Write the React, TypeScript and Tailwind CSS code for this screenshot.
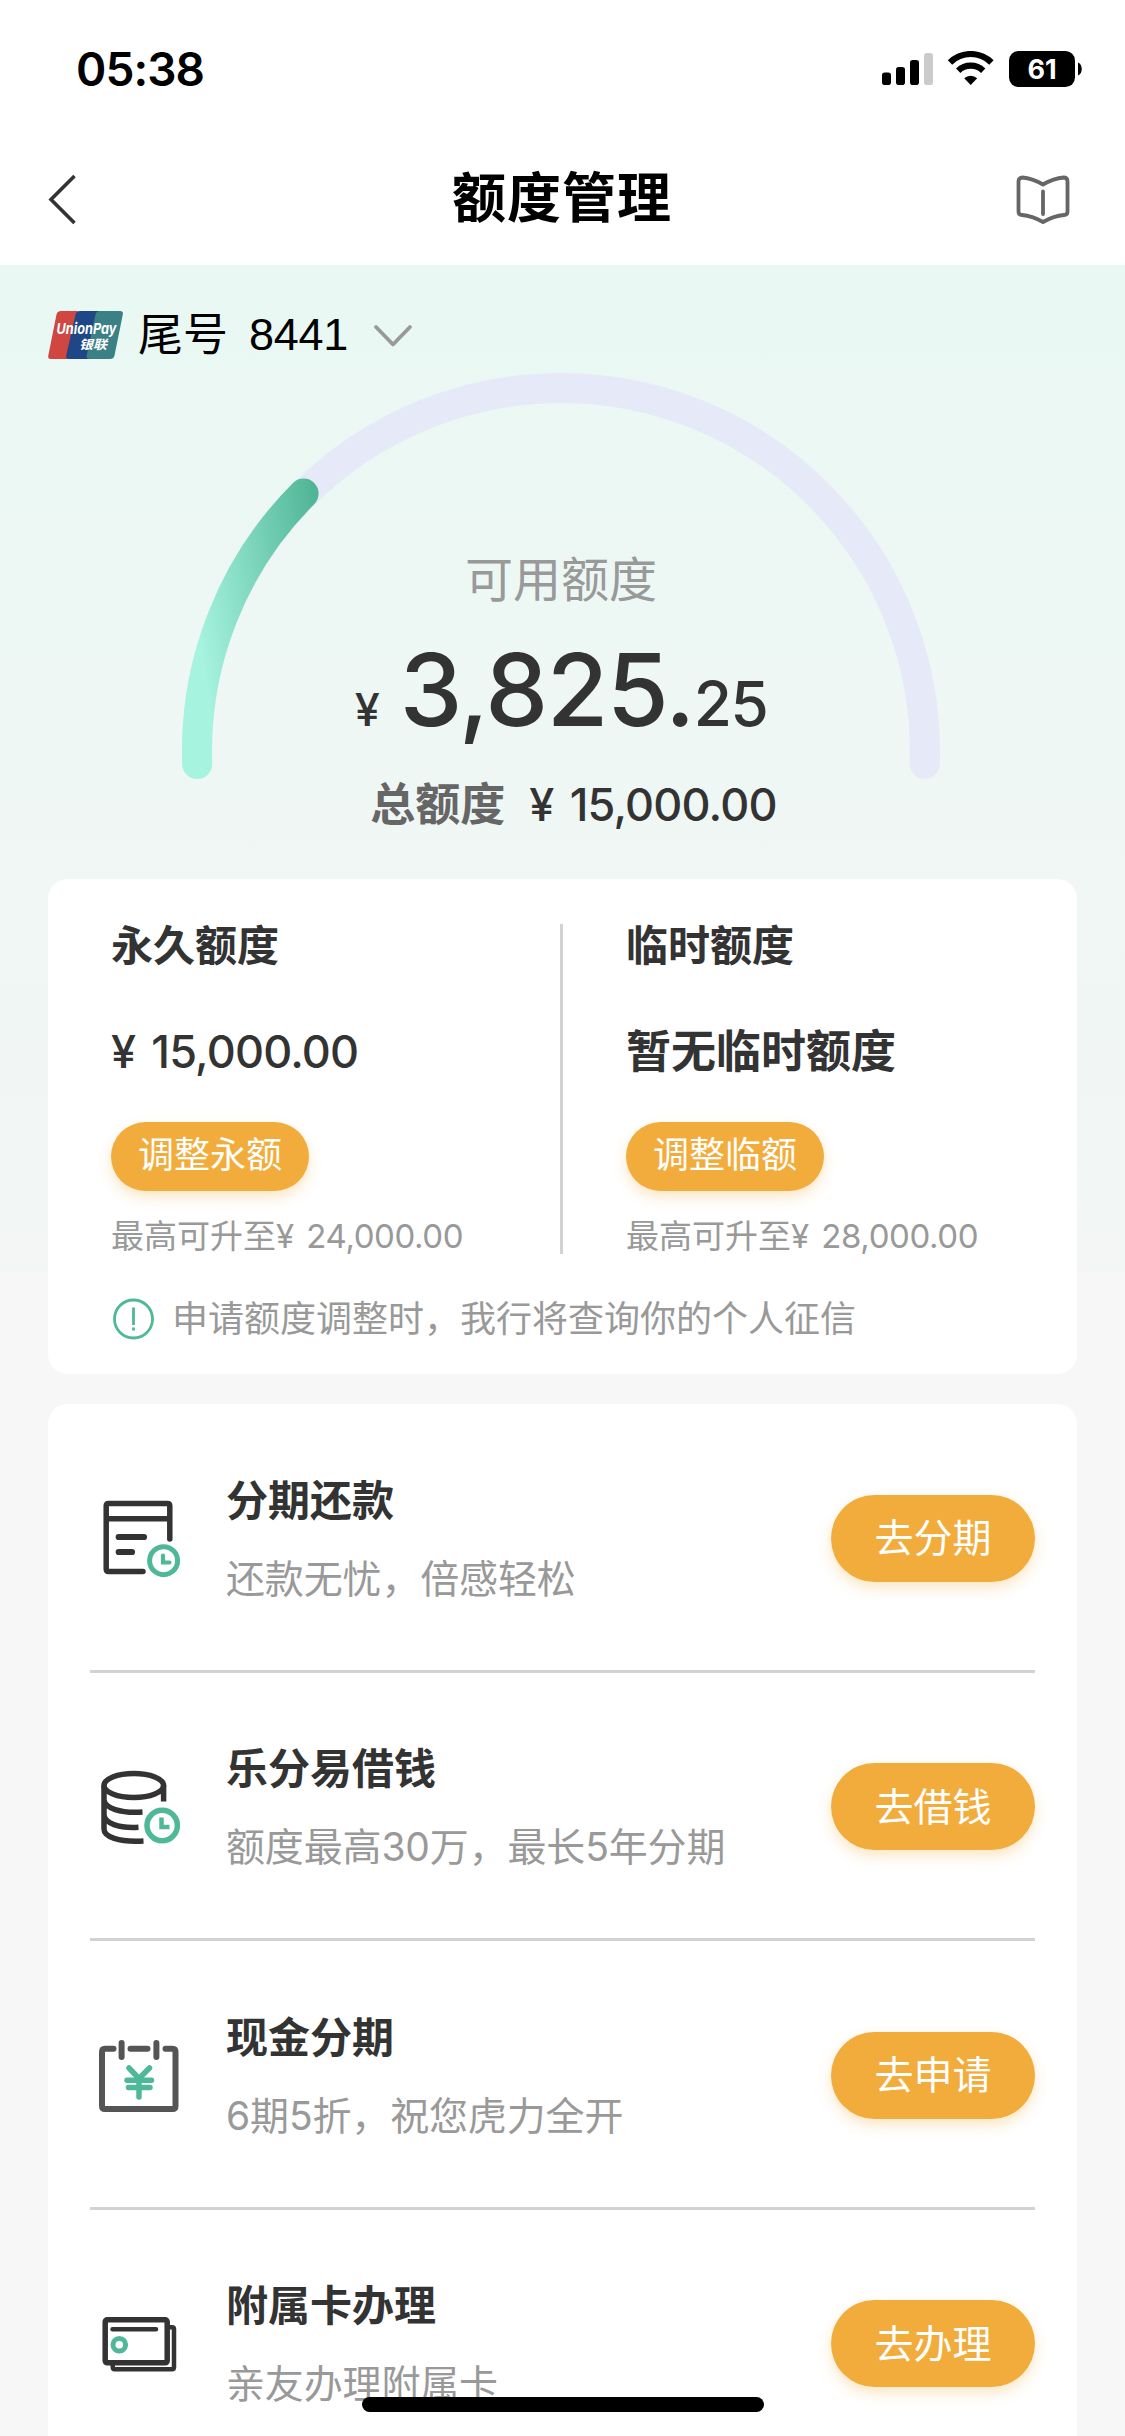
import type { ReactNode } from 'react'

interface Service {
  title: string
  desc: string
  action: string
  icon: ReactNode
}

function StatusBar() {
  return (
    <div className="flex h-[132px] items-center justify-between pt-[6px] pl-[76px] pr-[43px]">
      <span className="text-[46px] leading-[56px] font-semibold tracking-[-0.9px] text-black">05:38</span>
      <svg width="201" height="36" viewBox="0 0 201 36">
        <rect x="1" y="21.5" width="9" height="12.5" rx="2.8" />
        <rect x="15" y="16" width="9" height="18" rx="2.8" />
        <rect x="29" y="9" width="9" height="25" rx="2.8" />
        <rect x="43" y="2" width="9" height="32" rx="2.8" fill="#cbcbcb" />
        <g fill="none" stroke="#000" strokeWidth="6.2">
          <path d="M69 11.5a29.5 29.5 0 0 1 41.4 0" />
          <path d="M77.2 19.7a18 18 0 0 1 25 0" />
        </g>
        <path d="M83.2 27.2a9.5 9.5 0 0 1 13 0L89.7 34z" />
        <rect x="128" y="0" width="66" height="36" rx="9.5" />
        <path d="M197 11.5c5 2 5 11 0 13z" />
        <text x="161" y="28" textAnchor="middle" fill="#fff" className="text-[27px] font-bold">61</text>
      </svg>
    </div>
  )
}

function NavBar() {
  return (
    <div className="flex h-[133px] items-center justify-between pl-[47px] pr-[55px]">
      <svg width="54" height="52" viewBox="0 0 54 52" fill="none" stroke="#333" strokeWidth="3.6">
        <path d="M27.5 3L4 26.5L27.5 50" />
      </svg>
      <h1 className="ml-[7px] text-[54px] leading-[70px] font-bold tracking-[1px] text-black">额度管理</h1>
      <svg width="54" height="52" viewBox="0 0 54 52" fill="none" stroke="#666" strokeWidth="3.8" strokeLinecap="round" strokeLinejoin="round">
        <path d="M27 11.5C20 7.5 13 5 6.5 4.500Q2.500 4.500 2.500 8.500V38.500Q2.500 42 6 42C13 42.500 20 45 27 49C34 45 41 42.500 48 42Q51.500 42 51.500 38.500V8.500Q51.500 4.500 47.500 4.500C41 5 34 7.500 27 11.500Z" />
        <path d="M27 18.500V41" />
      </svg>
    </div>
  )
}

function UnionPayLogo() {
  return (
    <svg className="overflow-visible" width="75" height="48" viewBox="0 0 75 48">
      <path d="M13 0H30L20 48H3Q-.5 48 .3 44.500L8.500 3.500Q9.300 0 13 0Z" fill="#cf4740" />
      <path d="M32 0H53L42 48H21Q17.500 48 18.200 44.500L27.500 3.500Q28.300 0 32 0Z" fill="#1f4788" />
      <path d="M52 0H72Q75.600 0 74.800 3.500L66.500 44.500Q65.700 48 62 48H42Q38 48 38.700 44.500L47.500 3.500Q48.300 0 52 0Z" fill="#3a8186" />
      <g fill="#fff" className="font-bold italic">
        <text x="8.5" y="23" textLength="60" lengthAdjust="spacingAndGlyphs" className="text-[15px]">UnionPay</text>
        <text x="31" y="37.500" textLength="28" lengthAdjust="spacingAndGlyphs" className="text-[12.5px]">银联</text>
      </g>
    </svg>
  )
}

function CardSelector() {
  return (
    <div className="flex h-[107px] items-center pt-[33px] pl-12 text-black">
      <UnionPayLogo />
      <span className="ml-[15px] text-[45px] leading-[60px]">尾号</span>
      <span className="ml-[21px] w-[98px] font-['Liberation_Sans',sans-serif] text-[45px] leading-[58px] tracking-[-0.3px]">8441</span>
      <svg className="ml-[25px] mt-[2px]" width="42" height="24" viewBox="0 0 42 24" fill="none" stroke="#999" strokeWidth="3.8" strokeLinecap="round" strokeLinejoin="round">
        <path d="M4 3L21 20.500L38 3" />
      </svg>
    </div>
  )
}

function Money({ amount }: { amount: string }) {
  return (
    <>
      ¥<span className="ml-[0.34em] tracking-[-0.018em]">{amount}</span>
    </>
  )
}

function LimitGauge() {
  return (
    <div className="mr-[3px] grid h-[507px] justify-center">
      <svg className="col-start-1 row-start-1" width="758" height="408" viewBox="0 0 758 408" fill="none" strokeWidth="30" strokeLinecap="round">
        <defs>
          <linearGradient id="used" gradientUnits="userSpaceOnUse" x1="0" y1="150" x2="135" y2="130">
            <stop offset="0" stopColor="#a6f3df" />
            <stop offset="1" stopColor="#4fb595" />
          </linearGradient>
        </defs>
        <path d="M15.200 392A364 364 0 1 1 742.800 392" stroke="#e6e9f7" />
        <path d="M15.200 392A364 364 0 0 1 121.600 121.600" stroke="url(#used)" />
      </svg>
      <div className="col-start-1 row-start-1 flex flex-col items-center pt-[178px] text-[#333]">
        <div className="text-[48px] leading-[60px] text-[#999]">可用额度</div>
        <div className="mt-[25px] flex items-baseline leading-[110px] font-medium">
          <span className="text-[45px]">¥</span>
          <span className="ml-[20px] text-[100px] tracking-[-1.4px]">3,825.</span>
          <span className="text-[62px] tracking-[-1.5px]">25</span>
        </div>
        <div className="mt-[10px] flex items-baseline pl-[25px] text-[45px] leading-[60px] font-medium">
          <span className="mr-[24px] font-bold text-[#666]">总额度</span>
          <Money amount="15,000.00" />
        </div>
      </div>
    </div>
  )
}

interface LimitColumnProps {
  title: string
  value: ReactNode
  action: string
  max: string
}

function LimitColumn({ title, value, action, max }: LimitColumnProps) {
  return (
    <div className="flex h-[330px] flex-1 flex-col items-start">
      <div className="text-[42px] leading-[44px] font-bold">{title}</div>
      <div className="mt-[56px] text-[45px] leading-[56px] font-medium">{value}</div>
      <button className="mt-[42px] h-[69px] w-[198px] shrink-0 rounded-full bg-[#f2ac3c] pb-[3px] text-[36px] leading-[62px] text-white shadow-[0_6px_14px_rgba(242,172,60,0.3)]">
        {action}
      </button>
      <div className="mt-[24px] text-[33px] leading-[42px] whitespace-nowrap text-[#999]">
        最高可升至¥<span className="ml-[0.37em] tracking-[-0.012em]">{max}</span>
      </div>
    </div>
  )
}

function LimitCard() {
  return (
    <div className="mx-12 h-[495px] rounded-[20px] bg-white pt-[45px] pl-[63px] text-[#333]">
      <div className="flex">
        <LimitColumn title="永久额度" value={<Money amount="15,000.00" />} action="调整永额" max="24,000.00" />
        <div className="mr-[63px] -ml-[2px] h-[330px] w-[3px] bg-[#d2d2d2]" />
        <LimitColumn title="临时额度" value={<span className="font-bold">暂无临时额度</span>} action="调整临额" max="28,000.00" />
      </div>
      <div className="mt-[38px] flex items-center">
        <svg width="46" height="46" viewBox="0 0 46 46" fill="none" stroke="#4fb898" strokeWidth="2.8">
          <circle cx="22.500" cy="23" r="19" />
          <path d="M22.500 11.500V29M22.500 31.500V34.500" />
        </svg>
        <span className="ml-[15px] text-[36px] leading-[54px] text-[#999]">申请额度调整时，我行将查询你的个人征信</span>
      </div>
    </div>
  )
}

const services: Service[] = [
  {
    title: '分期还款',
    desc: '还款无忧，倍感轻松',
    action: '去分期',
    icon: (
      <>
        <path d="M71.800 43V10Q71.800 7.500 69.300 7.500H10.700Q8.200 7.500 8.200 10V73Q8.200 75.500 10.700 75.500H45M9 22.700H71" />
        <path d="M20.700 41H46M20.700 56H34" strokeWidth="6.2" />
        <g stroke="#4fb898" strokeWidth="5">
          <circle cx="65.600" cy="64.700" r="14" />
          <path d="M65 59.500V66.500H71.500" strokeWidth="4.200" />
        </g>
      </>
    ),
  },
  {
    title: '乐分易借钱',
    desc: '额度最高30万，最长5年分期',
    action: '去借钱',
    icon: (
      <>
        <ellipse cx="35.800" cy="20.500" rx="29.800" ry="12" />
        <path strokeLinecap="butt" d="M6 20.500V64C6 71.500 20 77.500 45.500 76M65.600 20.500V36.500M6 35C7 43 22 48.500 44.500 47M6 50C7 58 20 63.500 40.500 62.300" />
        <g stroke="#4fb898">
          <circle cx="64.200" cy="60.500" r="15.200" />
          <path d="M63.500 52.500V62H71.500" strokeLinecap="butt" strokeWidth="4.500" />
        </g>
      </>
    ),
  },
  {
    title: '现金分期',
    desc: '6期5折，祝您虎力全开',
    action: '去申请',
    icon: (
      <>
        <path stroke="#555" strokeWidth="6" d="M15.500 15.800H7Q4 15.800 4 18.800V73Q4 76 7 76H74.500Q77.500 76 77.500 73V18.800Q77.500 15.800 74.500 15.800H67.500M32.500 15.800H49.500M23.600 10V24M58.400 10V24" />
        <path stroke="#4fb898" d="M31 35L41 45.500L51.500 35M41 45.500V64M29 47.200H53.500M30.500 54.500H52" />
      </>
    ),
  },
  {
    title: '附属卡办理',
    desc: '亲友办理附属卡',
    action: '去办理',
    icon: (
      <>
        <rect x="7.200" y="17.800" width="62" height="43" rx="2" />
        <path strokeWidth="4.500" d="M71.500 25.300H74Q76 25.300 76 27.300V65.300Q76 67.300 74 67.300H16.500Q14.700 67.300 14.700 64.500V62M14.500 27.200H58" />
        <circle cx="21.300" cy="42.700" r="6.300" stroke="#4fb898" strokeWidth="5" />
      </>
    ),
  },
]

function ServiceRow({ title, desc, action, icon }: Service) {
  return (
    <div className="flex h-[268.5px] items-center border-b-[3px] border-[#d2d2d2] pt-[3px] last:border-transparent">
      <svg className="ml-2" width="84" height="84" viewBox="0 0 84 84" fill="none" stroke="#333" strokeWidth="5.5" strokeLinecap="round">
        {icon}
      </svg>
      <div className="ml-[44px] flex-1 pt-[3px]">
        <div className="text-[42px] leading-[60px] font-bold text-[#333]">{title}</div>
        <div className="mt-[18px] text-[39px] leading-[60px] tracking-[-0.15px] text-[#999]">{desc}</div>
      </div>
      <button className="h-[87px] w-[204px] rounded-full bg-[#f2ac3c] text-[39px] leading-[84px] text-white shadow-[0_6px_14px_rgba(242,172,60,0.3)]">
        {action}
      </button>
    </div>
  )
}

export default function App() {
  return (
    <div className="relative h-[2436px] w-[1125px] overflow-hidden bg-white font-['Inter','Noto_Sans_CJK_SC',sans-serif]">
      <StatusBar />
      <NavBar />
      <main className="h-[2171px] bg-[#f7f7f7] bg-[linear-gradient(#e9f8f3,#eff7f4_50%,#f3f6f5)] bg-[length:100%_1007px] bg-no-repeat">
        <CardSelector />
        <LimitGauge />
        <LimitCard />
        <div className="mx-12 mt-[30px] rounded-t-[20px] bg-white px-[42px]">
          {services.map((service) => (
            <ServiceRow key={service.title} {...service} />
          ))}
        </div>
      </main>
      {/* home indicator */}
      <div className="absolute bottom-6 left-[362px] h-[15px] w-[402px] rounded-full bg-black" />
    </div>
  )
}
